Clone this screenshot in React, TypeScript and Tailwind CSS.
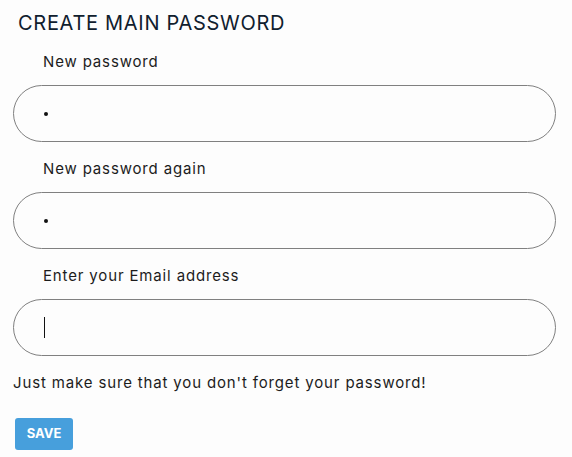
export default function App() {
  return (
    <div className="min-h-[457px] w-[572px] bg-[#fdfdfd] px-[13px] pt-[10px] font-['Inter',sans-serif] text-[#1c1c1c]">
      <h1 className="ml-[5px] text-[20px] leading-[26px] font-normal tracking-[0.7px] text-[#10202e]">CREATE MAIN PASSWORD</h1>

      <label className="mt-[15px] mb-[12px] ml-[30px] block text-[15px] leading-[22px] tracking-[0.85px]">New password</label>
      <div className="flex h-[57px] w-[543px] items-center rounded-full border border-[#808080] pl-[30px]">
        <span className="h-[4px] w-[4px] rounded-full bg-[#111]" />
      </div>

      <label className="mt-[16px] mb-[12px] ml-[30px] block text-[15px] leading-[22px] tracking-[0.85px]">New password again</label>
      <div className="flex h-[57px] w-[543px] items-center rounded-full border border-[#808080] pl-[30px]">
        <span className="h-[4px] w-[4px] rounded-full bg-[#111]" />
      </div>

      <label className="mt-[16px] mb-[12px] ml-[30px] block text-[15px] leading-[22px] tracking-[0.85px]">Enter your Email address</label>
      <div className="flex h-[57px] w-[543px] items-center rounded-full border border-[#808080] pl-[30px]">
        <span className="h-[21px] w-px bg-[#111]" />
      </div>

      <p className="mt-[16px] text-[15px] leading-[22px] tracking-[0.85px]">Just make sure that you don't forget your password!</p>

      <button className="mt-[24px] ml-[2px] h-[32px] w-[58px] rounded-[3px] bg-[#479fdc] text-[13px] font-bold text-white">
        SAVE
      </button>
    </div>
  );
}
